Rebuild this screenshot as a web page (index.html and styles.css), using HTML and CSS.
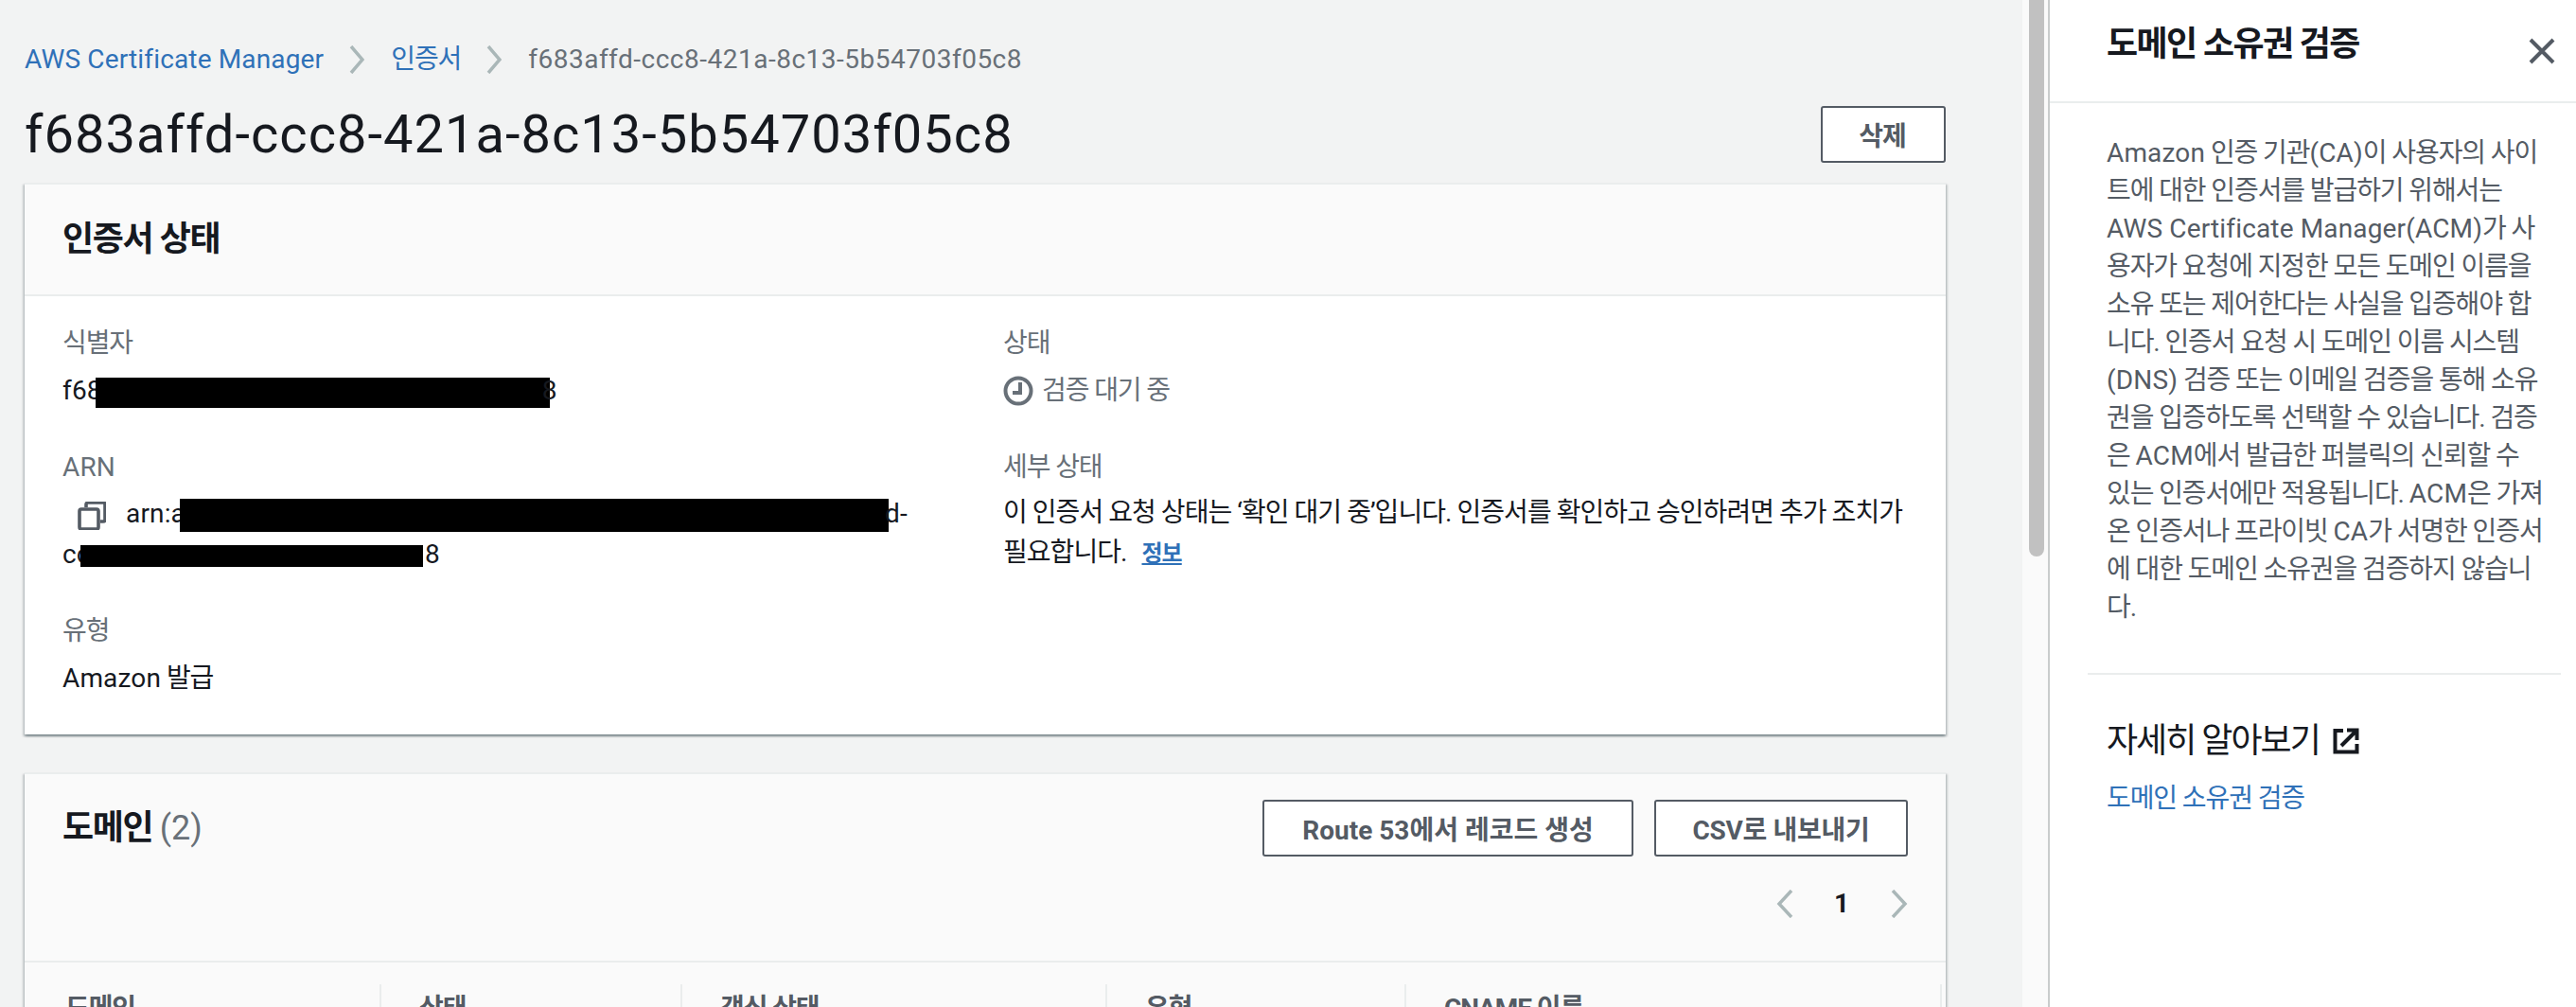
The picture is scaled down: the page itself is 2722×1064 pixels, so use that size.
FILE: index.html
```html
<!DOCTYPE html>
<html lang="ko">
<head>
    <meta charset="UTF-8">
    <title>AWS Certificate Manager</title>
    <link rel="stylesheet" href="styles.css">
</head>
<body>
    <div class="wrapper">
        <div class="main">
            <div class="breadcrumb">
                <a class="en" href="#">AWS Certificate Manager</a>
                <svg class="crumb-icon" viewBox="0 0 16 30"><path d="M2 1 L14 15 L2 29" /></svg>
                <a href="#">인증서</a>
                <svg class="crumb-icon" viewBox="0 0 16 30"><path d="M2 1 L14 15 L2 29" /></svg>
                <span class="crumb-id">f683affd-ccc8-421a-8c13-5b54703f05c8</span>
            </div>
            <div class="title-row">
                <h1>f683affd-ccc8-421a-8c13-5b54703f05c8</h1>
                <button class="btn btn-delete">삭제</button>
            </div>

            <div class="card">
                <div class="card-header">
                    <h2>인증서 상태</h2>
                </div>
                <div class="status-grid">
                    <div class="col">
                        <div class="field">
                            <div class="label">식별자</div>
                            <div class="value single en">f68<span class="mask mask-id"></span>8</div>
                        </div>
                        <div class="field">
                            <div class="label en">ARN</div>
                            <div class="value arn en">
                                <svg class="copy-icon" viewBox="0 0 30 30">
                                    <path d="M9 6 V3 a2 2 0 0 1 2 -2 H27 a2 2 0 0 1 2 2 V19 a2 2 0 0 1 -2 2 H24" />
                                    <rect x="2" y="8" width="20" height="21" rx="2" />
                                </svg>arn:a<span class="mask mask-arn1"></span>d-<br>co<span class="mask mask-arn2"></span>8
                            </div>
                        </div>
                        <div class="field">
                            <div class="label">유형</div>
                            <div class="value single"><span class="en">Amazon</span> 발급</div>
                        </div>
                    </div>
                    <div class="col">
                        <div class="field">
                            <div class="label">상태</div>
                            <div class="value single pending">
                                <svg class="clock-icon" viewBox="0 0 32 32">
                                    <circle cx="16" cy="16" r="13.5" />
                                    <path d="M18 7 V18 H10" />
                                </svg>검증 대기 중
                            </div>
                        </div>
                        <div class="field">
                            <div class="label">세부 상태</div>
                            <div class="value details">이 인증서 요청 상태는 ‘확인 대기 중’입니다. 인증서를 확인하고 승인하려면 추가 조치가<br>필요합니다. <a class="info-link" href="#">정보</a></div>
                        </div>
                    </div>
                </div>
            </div>

            <div class="card card-domains">
                <div class="domains-header">
                    <div class="domains-top">
                        <h2>도메인 <span class="count">(2)</span></h2>
                        <div class="actions">
                            <button class="btn btn-route">Route 53에서 레코드 생성</button>
                            <button class="btn btn-csv">CSV로 내보내기</button>
                        </div>
                    </div>
                    <div class="pagination">
                        <svg class="page-icon" viewBox="0 0 19 30"><path d="M16 1 L3 15 L16 29" /></svg>
                        <span class="page-num">1</span>
                        <svg class="page-icon" viewBox="0 0 19 30"><path d="M3 1 L16 15 L3 29" /></svg>
                    </div>
                </div>
                <div class="table-head">
                    <div class="th th-first">도메인</div>
                    <div class="th">상태</div>
                    <div class="th">갱신 상태</div>
                    <div class="th">유형</div>
                    <div class="th">CNAME 이름</div>
                    <div class="th"></div>
                </div>
            </div>
        </div>

        <div class="scroll-track">
            <div class="scroll-thumb"></div>
        </div>

        <div class="panel">
            <div class="panel-header">
                <h3>도메인 소유권 검증</h3>
                <svg class="close-icon" viewBox="0 0 28 28"><path d="M2 2 L26 26 M26 2 L2 26" /></svg>
            </div>
            <div class="panel-body">
                <p><span class="en">Amazon</span> 인증 기관<span class="en">(CA)</span>이 사용자의 사이<br>트에 대한 인증서를 발급하기 위해서는<br><span class="en">AWS Certificate Manager(ACM)</span>가 사<br>용자가 요청에 지정한 모든 도메인 이름을<br>소유 또는 제어한다는 사실을 입증해야 합<br>니다. 인증서 요청 시 도메인 이름 시스템<br><span class="en">(DNS)</span> 검증 또는 이메일 검증을 통해 소유<br>권을 입증하도록 선택할 수 있습니다. 검증<br>은 <span class="en">ACM</span>에서 발급한 퍼블릭의 신뢰할 수<br>있는 인증서에만 적용됩니다. <span class="en">ACM</span>은 가져<br>온 인증서나 프라이빗 <span class="en">CA</span>가 서명한 인증서<br>에 대한 도메인 소유권을 검증하지 않습니<br>다.</p>
            </div>
            <div class="panel-links">
                <h4>자세히 알아보기
                    <svg class="external-icon" viewBox="0 0 28 28">
                        <path d="M11 3 H2.5 V25.5 H25.5 V17" />
                        <path d="M9 19 L25 3 M15 2.5 H25.5 V13" />
                    </svg>
                </h4>
                <a href="#">도메인 소유권 검증</a>
            </div>
        </div>
    </div>
</body>
</html>
```

FILE: styles.css
```css
html, body {
    height: 100%;
}

body {
    margin: 0;
    padding: 0;
    overflow: hidden;
    font-family: 'Roboto', 'Noto Sans CJK KR', sans-serif;
    font-size: 28px;
    line-height: 40px;
    letter-spacing: -1.1px;
    color: #16191f;
    background-color: #fff;
}

a {
    color: #2f71b8;
    text-decoration: none;
}

h1, h2, h3, h4, p {
    margin: 0;
}

/* latin runs sit a little wider than the hangul around them */
.en {
    letter-spacing: .15px;
}

.wrapper {
    display: flex;
    height: 1064px;
    overflow: hidden;
}

.main {
    width: 2137px;
    flex-shrink: 0;
    box-sizing: border-box;
    padding: 43px 81px 0 26px;
    background-color: #f2f3f3;
}

.breadcrumb {
    display: flex;
    align-items: center;
    height: 40px;
    color: #687078;
}

.crumb-id {
    letter-spacing: .5px;
}

.crumb-icon {
    width: 16px;
    height: 30px;
    margin: 0 28px 0 27px;
    fill: none;
    stroke: #aab7b8;
    stroke-width: 3.5;
}

.title-row {
    display: flex;
    justify-content: space-between;
    align-items: center;
    height: 60px;
    margin: 29px 0 21px;
}

h1 {
    font-size: 56px;
    font-weight: 400;
    line-height: 60px;
    letter-spacing: 1.03px;
}

.btn {
    box-sizing: border-box;
    height: 60px;
    padding: 0;
    border: 2px solid #545b64;
    border-radius: 3px;
    background-color: #fff;
    color: #545b64;
    font-family: inherit;
    font-size: 28px;
    font-weight: 700;
}

.btn-delete {
    width: 132px;
    letter-spacing: -1px;
    padding-right: 2px;
}

.card {
    background-color: #fff;
    border-top: 2px solid #eaeded;
    box-shadow: 0 2px 2px 0 rgba(0, 28, 36, .3), 2px 2px 2px 0 rgba(0, 28, 36, .15), -2px 2px 2px 0 rgba(0, 28, 36, .15);
}

.card-header {
    display: flex;
    align-items: center;
    height: 116px;
    padding-left: 40px;
    background-color: #fafafa;
    border-bottom: 2px solid #eaeded;
}

h2 {
    font-size: 36px;
    font-weight: 700;
    line-height: 44px;
    letter-spacing: -1.4px;
}

.status-grid {
    display: grid;
    grid-template-columns: 994px 1fr;
    height: 463px;
    box-sizing: border-box;
    padding: 30px 40px 0;
}

.field {
    margin-bottom: 40px;
}

.label {
    color: #687078;
}

.value {
    line-height: 42px;
}

.single {
    margin-top: 9px;
}

.arn {
    margin-top: 7px;
    line-height: 43px;
}

.details {
    margin-top: 7px;
    letter-spacing: -.95px;
}

.mask {
    display: inline-block;
    background-color: #000;
    vertical-align: middle;
}

.mask-id {
    width: 480px;
    height: 32px;
    margin: 0 -8px 0 -7px;
}

.mask-arn1 {
    width: 749px;
    height: 35px;
    margin: 0 -4px 0 -6px;
}

.mask-arn2 {
    width: 362px;
    height: 23px;
    margin: 0 2px 0 -12px;
}

.copy-icon {
    width: 30px;
    height: 30px;
    margin: 0 21px 0 16px;
    vertical-align: middle;
    fill: #fff;
    stroke: #545b64;
    stroke-width: 3.6;
}

.pending {
    display: flex;
    align-items: center;
    color: #687078;
}

.clock-icon {
    width: 32px;
    height: 32px;
    margin-right: 9px;
    fill: none;
    stroke: #687078;
    stroke-width: 4;
}

.info-link {
    margin-left: 10px;
    font-size: 24px;
    font-weight: 700;
    text-decoration: underline;
}

.card-domains {
    margin-top: 40px;
    background-color: #fafafa;
}

.domains-header {
    box-sizing: border-box;
    height: 199px;
    padding: 27px 40px 0;
    border-bottom: 2px solid #eaeded;
}

.domains-top {
    display: flex;
    justify-content: space-between;
    align-items: center;
}

.count {
    color: #687078;
    font-weight: 400;
    letter-spacing: 0;
}

.actions {
    display: flex;
    gap: 22px;
}

.btn-route {
    width: 392px;
}

.btn-csv {
    width: 268px;
    letter-spacing: -.3px;
}

.pagination {
    display: flex;
    justify-content: flex-end;
    align-items: center;
    height: 40px;
    margin-top: 30px;
}

.page-icon {
    width: 19px;
    height: 30px;
    fill: none;
    stroke: #aab7b8;
    stroke-width: 3.5;
}

.page-num {
    width: 101px;
    padding-right: 2px;
    box-sizing: border-box;
    text-align: center;
    font-weight: 700;
}

.table-head {
    display: grid;
    grid-template-columns: 375px 318px 449px 316px 566px 6px;
}

.th {
    box-sizing: border-box;
    margin-top: 23px;
    padding: 6px 0 0 40px;
    border-left: 2px solid #eaeded;
    color: #545b64;
    font-weight: 700;
    white-space: nowrap;
}

.th-first {
    padding-left: 43px;
    border-left: none;
}

.scroll-track {
    width: 27px;
    flex-shrink: 0;
    box-sizing: border-box;
    padding-left: 7px;
    background-color: #fafafa;
}

.scroll-thumb {
    width: 16px;
    height: 588px;
    border-radius: 0 0 8px 8px;
    background-color: #c1c1c1;
}

.panel {
    flex: 1;
    min-width: 0;
    border-left: 2px solid #c9cccc;
    background-color: #fff;
}

.panel-header {
    display: flex;
    justify-content: space-between;
    align-items: center;
    box-sizing: border-box;
    height: 109px;
    padding: 0 22px 14px 60px;
    border-bottom: 2px solid #eaeded;
}

h3 {
    font-size: 36px;
    font-weight: 700;
    line-height: 44px;
    letter-spacing: -1.6px;
}

.close-icon {
    width: 28px;
    height: 28px;
    margin-top: 14px;
    fill: none;
    stroke: #545b64;
    stroke-width: 4;
}

.panel-body {
    box-sizing: border-box;
    height: 602px;
    padding: 33px 0 0 60px;
    color: #545b64;
    white-space: nowrap;
}

.panel-links {
    margin: 0 16px 0 40px;
    padding: 48px 0 0 20px;
    border-top: 2px solid #eaeded;
}

h4 {
    display: flex;
    align-items: center;
    gap: 14px;
    font-size: 36px;
    font-weight: 400;
    line-height: 44px;
    letter-spacing: -2px;
}

.external-icon {
    width: 28px;
    height: 28px;
    fill: none;
    stroke: #16191f;
    stroke-width: 4;
}

.panel-links a {
    display: block;
    margin-top: 19px;
}
```
